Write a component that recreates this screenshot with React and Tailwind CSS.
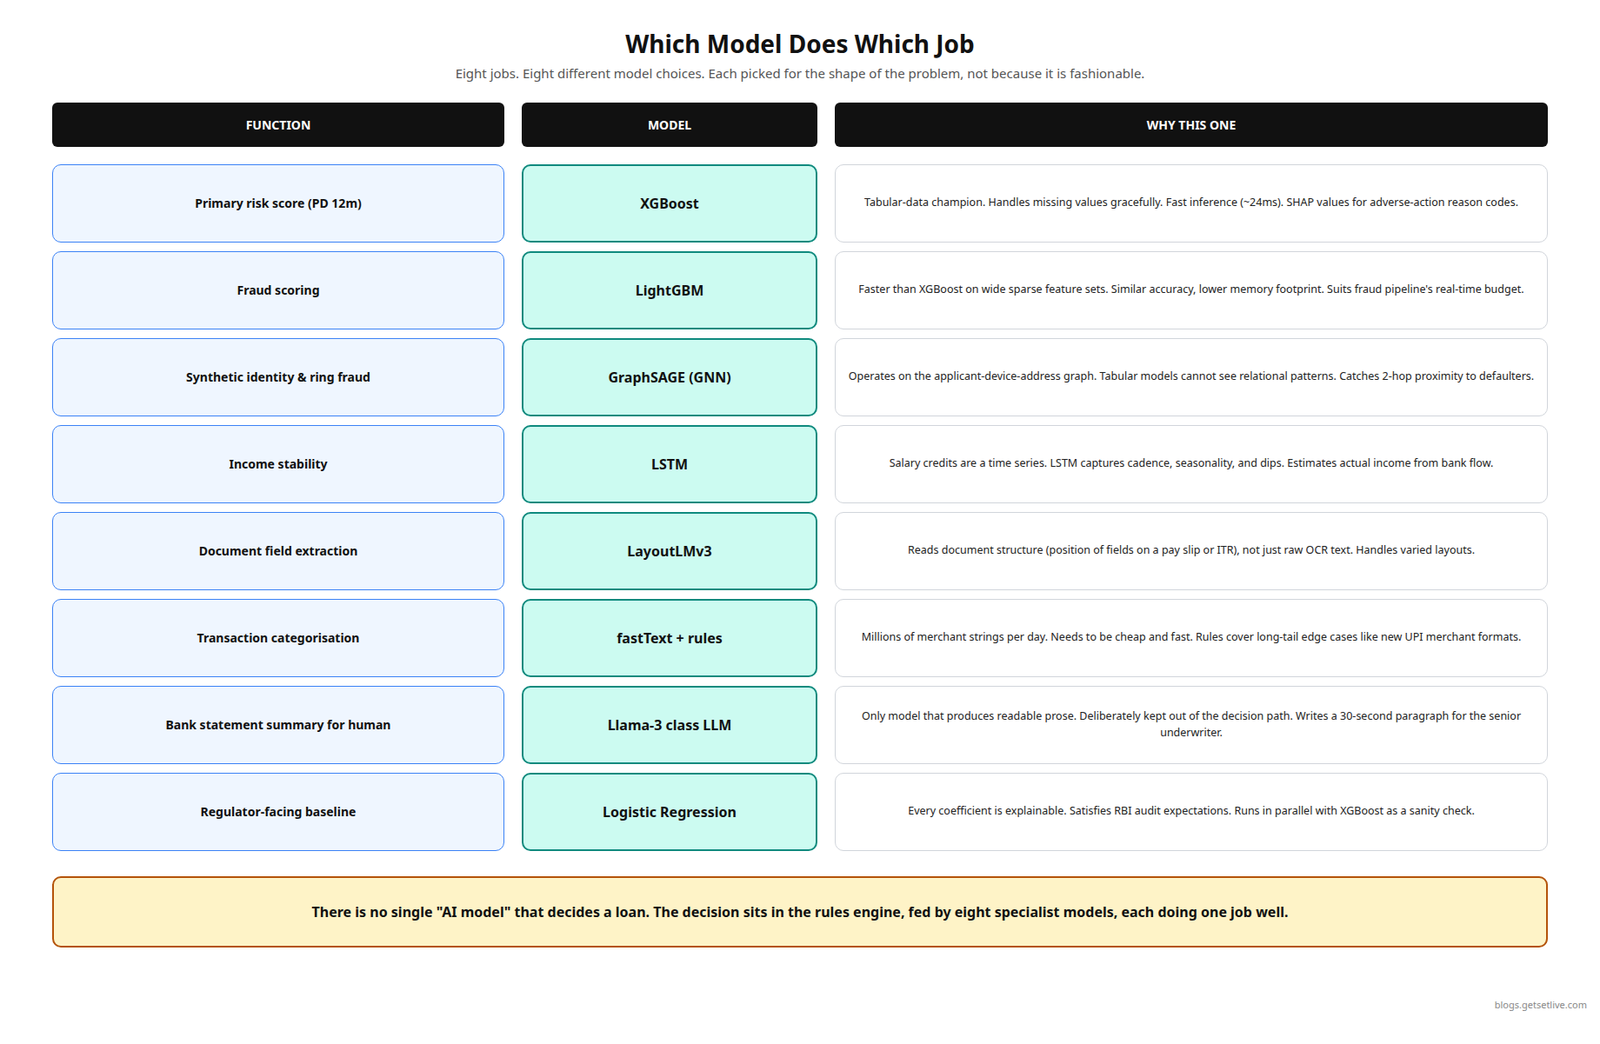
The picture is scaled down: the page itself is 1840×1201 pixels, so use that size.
import React from "react";

const rows = [
  ["Primary risk score (PD 12m)", "XGBoost", "Tabular-data champion. Handles missing values gracefully. Fast inference (~24ms). SHAP values for adverse-action reason codes."],
  ["Fraud scoring", "LightGBM", "Faster than XGBoost on wide sparse feature sets. Similar accuracy, lower memory footprint. Suits fraud pipeline's real-time budget."],
  ["Synthetic identity & ring fraud", "GraphSAGE (GNN)", "Operates on the applicant-device-address graph. Tabular models cannot see relational patterns. Catches 2-hop proximity to defaulters."],
  ["Income stability", "LSTM", "Salary credits are a time series. LSTM captures cadence, seasonality, and dips. Estimates actual income from bank flow."],
  ["Document field extraction", "LayoutLMv3", "Reads document structure (position of fields on a pay slip or ITR), not just raw OCR text. Handles varied layouts."],
  ["Transaction categorisation", "fastText + rules", "Millions of merchant strings per day. Needs to be cheap and fast. Rules cover long-tail edge cases like new UPI merchant formats."],
  ["Bank statement summary for human", "Llama-3 class LLM", "Only model that produces readable prose. Deliberately kept out of the decision path. Writes a 30-second paragraph for the senior underwriter."],
  ["Regulator-facing baseline", "Logistic Regression", "Every coefficient is explainable. Satisfies RBI audit expectations. Runs in parallel with XGBoost as a sanity check."],
];

const App = () => {
  return (
    <div className="min-h-[1201px] bg-white px-[60px] pt-[33px] text-[#111] font-['Liberation_Sans',Arial,sans-serif]">
      <h1 className="text-center text-[28px] font-bold leading-[34px]">Which Model Does Which Job</h1>
      <p className="mt-[6px] text-center text-[15px] text-[#555]">
        Eight jobs. Eight different model choices. Each picked for the shape of the problem, not because it is fashionable.
      </p>

      <div className="mt-[22px] grid grid-cols-[520px_340px_1fr] gap-x-[20px] gap-y-[10px]">
        {["FUNCTION", "MODEL", "WHY THIS ONE"].map((h) => (
          <div key={h} className="mb-[10px] flex h-[51px] items-center justify-center rounded-[6px] bg-[#111] text-[14px] font-bold text-white">
            {h}
          </div>
        ))}
        {rows.map(([fn, model, why]) => (
          <React.Fragment key={fn}>
            <div className="flex h-[90px] items-center justify-center rounded-[10px] border border-[#3b82f6] bg-[#eff6ff] px-3 text-center text-[14px] font-bold">
              {fn}
            </div>
            <div className="flex h-[90px] items-center justify-center rounded-[10px] border-2 border-[#0f8a7e] bg-[#ccfbf1] px-3 text-center text-[16px] font-bold">
              {model}
            </div>
            <div className="flex h-[90px] items-center justify-center rounded-[10px] border border-[#d1d5db] bg-white px-[2px] text-center text-[12.5px] text-[#222]">
              {why}
            </div>
          </React.Fragment>
        ))}
      </div>

      <div className="mt-[29px] flex h-[82px] items-center justify-center rounded-[10px] border-2 border-[#b45309] bg-[#fef3c7] text-center text-[16px] font-bold">
        There is no single "AI model" that decides a loan. The decision sits in the rules engine, fed by eight specialist models, each doing one job well.
      </div>

      <div className="mt-[58px] -mr-[45px] text-right text-[11px] text-[#888]">blogs.getsetlive.com</div>
    </div>
  );
};

export default App;
